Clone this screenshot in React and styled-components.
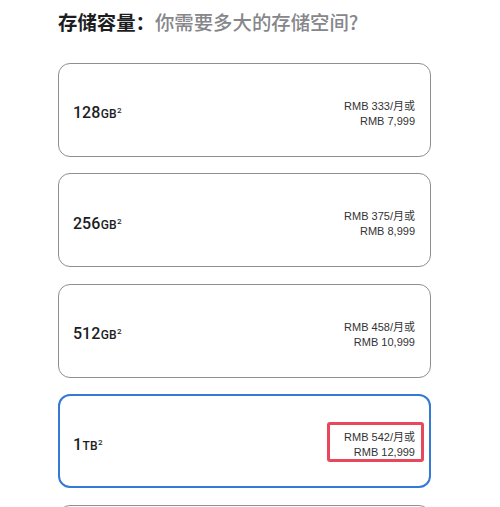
import React from 'react';
import styled, { createGlobalStyle } from 'styled-components';

const Global = createGlobalStyle`
  html, body {
    margin: 0;
    padding: 0;
    background: #fff;
  }
  body {
    font-family: "Liberation Sans", "Noto Sans CJK SC", sans-serif;
    color: #1d1d1f;
    overflow: hidden;
  }
`;

const Page = styled.div`
  width: 500px;
  height: 507px;
  overflow: hidden;
  padding: 0 0 0 58px;
  box-sizing: border-box;
`;

const Title = styled.h2`
  margin: 0;
  height: 62.5px;
  padding-top: 9px;
  box-sizing: border-box;
  font-family: "Noto Sans CJK SC", sans-serif;
  font-size: 19.4px;
  font-weight: 700;
  line-height: 26px;
  color: #1d1d1f;
  span {
    color: #86868b;
    font-weight: 500;
  }
`;

const List = styled.div`
  display: flex;
  flex-direction: column;
  gap: 16.5px;
`;

const Card = styled.div`
  width: 373px;
  height: 94px;
  flex: none;
  box-sizing: border-box;
  border-radius: 12px;
  border: ${({ $selected }) => ($selected ? '2px solid #3479d5' : '1px solid #8e8e93')};
  display: flex;
  align-items: center;
  justify-content: space-between;
  padding: ${({ $selected }) => ($selected ? '0 14px 0 13px' : '0 15px 0 14px')};
`;

const Size = styled.div`
  font-family: Roboto, "Liberation Sans", sans-serif;
  font-weight: 500;
  font-size: 16px;
  color: #1d1d1f;
  display: flex;
  align-items: baseline;
  margin-top: 6px;
  small {
    font-size: 12px;
    margin-left: 0.5px;
  }
  sup {
    font-size: 8px;
    vertical-align: 0;
    position: relative;
    top: -5px;
    margin-left: 0.5px;
  }
`;

const Price = styled.div`
  position: relative;
  text-align: right;
  font-family: "Liberation Sans", "Noto Sans CJK SC", sans-serif;
  font-size: 11px;
  line-height: 15px;
  color: #333336;
  margin-top: 8px;
  ${({ $marked }) =>
    $marked &&
    `
    &::after {
      content: '';
      position: absolute;
      left: -17px;
      right: -9px;
      top: -8px;
      bottom: -2px;
      border: 3px solid #e8475c;
      border-radius: 3px;
    }
  `}
`;

const options = [
  { size: '128', unit: 'GB', month: '333', total: '7,999' },
  { size: '256', unit: 'GB', month: '375', total: '8,999' },
  { size: '512', unit: 'GB', month: '458', total: '10,999' },
  { size: '1', unit: 'TB', month: '542', total: '12,999', selected: true },
];

export default function App() {
  return (
    <Page>
      <Global />
      <Title>
        存储容量：<span>你需要多大的存储空间?</span>
      </Title>
      <List>
        {options.map((o) => (
          <Card key={o.size} $selected={o.selected}>
            <Size>
              {o.size}
              <small>{o.unit}</small>
              <sup>2</sup>
            </Size>
            <Price $marked={o.selected}>
              RMB {o.month}/月或
              <br />
              RMB {o.total}
            </Price>
          </Card>
        ))}
        <Card />
      </List>
    </Page>
  );
}
